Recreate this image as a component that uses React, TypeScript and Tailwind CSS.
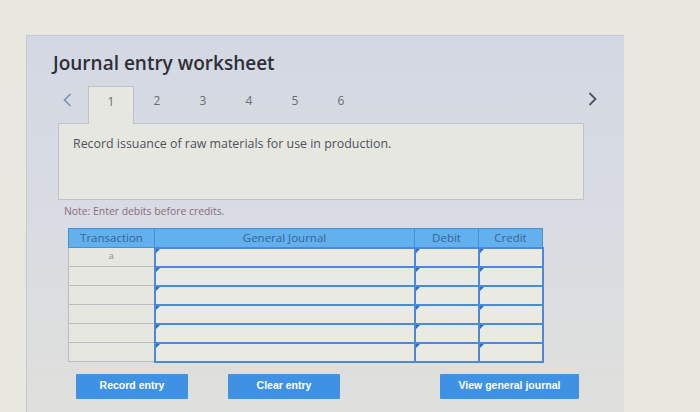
import React from "react";

const rows = ["a", "", "", "", "", ""];
const tabs = ["1", "2", "3", "4", "5", "6"];

function InputCell() {
  return (
    <td className="relative p-0 border-2 border-[#4a8ad6] bg-[#e9eae4] h-[19px]">
      <div className="absolute left-0 top-0 w-0 h-0 border-t-[4px] border-r-[4px] border-t-[#2f6fc0] border-r-transparent" />
    </td>
  );
}

export default function App() {
  return (
    <div className="w-[700px] h-[412px] overflow-hidden bg-[#e8e8e0] font-['Open_Sans',sans-serif]">
      <div className="ml-[26px] pt-[35px]">
        <div className="w-[598px] h-[377px] bg-gradient-to-b from-[#d4d8e3] via-[#d9dce2] to-[#dfe0dc] border-t border-l border-[#c4c8d2]">
          <h1 className="pl-[26px] pt-[14px] text-[19px] font-semibold text-[#2e2f36] leading-[26px]">
            Journal entry worksheet
          </h1>

          <div className="flex items-end h-[38px] mt-[9px] pl-[31px]">
            <div className="w-[30px] h-full flex items-center pl-[5px] pb-[8px] text-[#7d8fb5]">
              <svg width="9" height="14" viewBox="0 0 9 14" fill="none" stroke="currentColor" strokeWidth="1.6">
                <path d="M7.5 1L1.5 7l6 6" />
              </svg>
            </div>
            {tabs.map((t, i) => (
              <div
                key={t}
                className={`w-[46px] h-[38px] -mb-px flex items-start justify-center pt-[6px] text-[12px] text-[#6a6d74] ${
                  i === 0 ? "bg-[#e6e7e1] border border-b-0 border-[#bfc2c8] relative z-10" : ""
                }`}
              >
                {t}
              </div>
            ))}
            <div className="flex-1" />
            <div className="w-[36px] h-full flex items-center pb-[10px] text-[#4b5363]">
              <svg width="9" height="14" viewBox="0 0 9 14" fill="none" stroke="currentColor" strokeWidth="1.8">
                <path d="M1.5 1l6 6-6 6" />
              </svg>
            </div>
          </div>

          <div className="ml-[31px] w-[526px] h-[77px] bg-[#e6e7e1] border border-[#bfc2c8] pl-[14px] pt-[11px]">
            <p className="text-[12.4px] text-[#4f525a]">Record issuance of raw materials for use in production.</p>
          </div>

          <p className="ml-[37px] mt-[4px] text-[10.4px] text-[#8a6d7d] leading-[14px]">
            Note: Enter debits before credits.
          </p>

          <table className="ml-[41px] mt-[10px] w-[474px] border-collapse table-fixed">
            <colgroup>
              <col className="w-[86px]" />
              <col className="w-[260px]" />
              <col className="w-[64px]" />
              <col className="w-[64px]" />
            </colgroup>
            <thead>
              <tr className="bg-[#62b0ee] h-[19px] text-[11.5px] text-[#3a6590]">
                <th className="font-medium border border-[#4a90d0] py-0">Transaction</th>
                <th className="font-medium border border-[#4a90d0] py-0">General Journal</th>
                <th className="font-medium border border-[#4a90d0] py-0">Debit</th>
                <th className="font-medium border border-[#4a90d0] py-0">Credit</th>
              </tr>
            </thead>
            <tbody>
              {rows.map((r, i) => (
                <tr key={i} className="h-[19px]">
                  <td className="p-0 border border-[#b9bcc0] text-center text-[9.5px] text-[#8a8c90] bg-[#e6e7e1] align-top leading-[15px]">
                    {r}
                  </td>
                  <InputCell />
                  <InputCell />
                  <InputCell />
                </tr>
              ))}
            </tbody>
          </table>

          <div className="flex mt-[11px] ml-[49px] font-['Liberation_Sans',sans-serif]">
            <button className="w-[112px] h-[25px] bg-[#3f92e3] text-white text-[10.5px] font-bold rounded-[1px]">
              Record entry
            </button>
            <button className="ml-[40px] w-[112px] h-[25px] bg-[#3f92e3] text-white text-[10.5px] font-bold rounded-[1px]">
              Clear entry
            </button>
            <button className="ml-[100px] w-[139px] h-[25px] bg-[#3f92e3] text-white text-[10.5px] font-bold rounded-[1px]">
              View general journal
            </button>
          </div>
        </div>
      </div>
    </div>
  );
}
